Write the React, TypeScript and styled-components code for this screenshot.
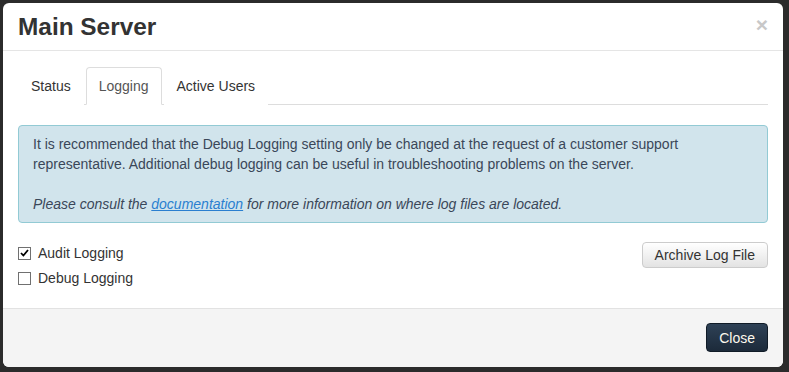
import React from 'react';
import styled, { createGlobalStyle } from 'styled-components';

const GlobalStyle = createGlobalStyle`
  html, body {
    margin: 0;
    padding: 0;
    background: #2b2b2b;
    font-family: "Liberation Sans", Arial, sans-serif;
    font-size: 14px;
    color: #333;
  }
`

const Backdrop = styled.div`
  width: 789px;
  height: 372px;
  padding: 3px 0 0 3px;
  box-sizing: border-box;
  overflow: hidden;
`

const Modal = styled.div`
  width: 780px;
  height: 364px;
  background: #fff;
  border-radius: 6px;
  display: flex;
  flex-direction: column;
  overflow: hidden;
`

const Header = styled.div`
  display: flex;
  align-items: center;
  justify-content: space-between;
  padding: 11px 15px;
  border-bottom: 1px solid #e5e5e5;
`

const Title = styled.h4`
  margin: 0;
  font-size: 24.4px;
  line-height: 25px;
  font-weight: bold;
  color: #333;
`

const CloseX = styled.button`
  border: 0;
  background: none;
  padding: 0;
  font-family: "Liberation Sans", Arial, sans-serif;
  font-size: 21px;
  font-weight: bold;
  line-height: 1;
  color: #c8c8c8;
  margin-top: -4px;
  cursor: pointer;
`

const Body = styled.div`
  flex: 1;
  padding: 16px 15px 15px;
`

const TabList = styled.ul`
  display: flex;
  list-style: none;
  margin: 0;
  padding: 0;
  border-bottom: 1px solid #ddd;
`

const Tab = styled.li<{ $active?: boolean }>`
  margin: 0 2px -1px 0;
  padding: 0 12px;
  line-height: 36px;
  border: 1px solid ${(p) => (p.$active ? '#ddd' : 'transparent')};
  border-bottom-color: ${(p) => (p.$active ? '#fff' : 'transparent')};
  border-radius: 4px 4px 0 0;
  background: #fff;
  color: ${(p) => (p.$active ? '#555' : '#333')};
  cursor: pointer;
`

const Alert = styled.div`
  margin-top: 20px;
  padding: 8px 14px;
  background: #d1e4ec;
  border: 1px solid #92cad4;
  border-radius: 4px;
  color: #3a4759;
  line-height: 20px;
`

const Para = styled.p<{ $italic?: boolean }>`
  margin: 0;
  font-style: ${(p) => (p.$italic ? 'italic' : 'normal')};
  & + & {
    margin-top: 20px;
  }
`

const DocLink = styled.a`
  color: #2a7fd0;
  text-decoration: underline;
`

const Options = styled.div`
  display: flex;
  justify-content: space-between;
  align-items: flex-start;
  margin-top: 19px;
`

const CheckList = styled.div`
  display: flex;
  flex-direction: column;
  gap: 5px;
  margin-top: 1px;
`

const CheckRow = styled.label`
  display: flex;
  align-items: center;
  gap: 7px;
  line-height: 20px;
  color: #333;
`

const Box = styled.span`
  width: 11px;
  height: 11px;
  border: 1px solid #707070;
  background: #fff;
  display: flex;
  align-items: center;
  justify-content: center;
`

const Button = styled.button<{ $dark?: boolean }>`
  font-family: "Liberation Sans", Arial, sans-serif;
  font-size: 14px;
  line-height: 20px;
  padding: ${(p) => (p.$dark ? '3.5px 12px' : '2px 12px')};
  border-radius: 4px;
  border: 1px solid ${(p) => (p.$dark ? '#101b27' : '#ccc')};
  background: ${(p) =>
    p.$dark
      ? 'linear-gradient(to bottom, #2e4156 0%, #1c2a3a 100%)'
      : 'linear-gradient(to bottom, #fff 0%, #e3e3e3 100%)'};
  color: ${(p) => (p.$dark ? '#fdf9ee' : '#333')};
  cursor: pointer;
`

const Footer = styled.div`
  display: flex;
  justify-content: flex-end;
  padding: 14px 15px 15px;
  background: #f4f4f4;
  border-top: 1px solid #e2e2e2;
`

function Checkbox({ label, checked }: { label: string; checked?: boolean }) {
  return <CheckRow>
    <Box>
      {checked && <svg width="9" height="8" viewBox="0 0 9 8">
        <path d="M1 4 L3.4 6.5 L8 1" fill="none" stroke="#000" strokeWidth="1.8" />
      </svg>}
    </Box>
    {label}
  </CheckRow>
}

export default function App() {
  return <>
    <GlobalStyle />
    <Backdrop>
      <Modal>
        <Header>
          <Title>Main Server</Title>
          <CloseX>×</CloseX>
        </Header>
        <Body>
          <TabList>
            <Tab>Status</Tab>
            <Tab $active>Logging</Tab>
            <Tab>Active Users</Tab>
          </TabList>
          <Alert>
            <Para>
              It is recommended that the Debug Logging setting only be changed at the request of a customer support
              representative. Additional debug logging can be useful in troubleshooting problems on the server.
            </Para>
            <Para $italic>
              Please consult the <DocLink href="#">documentation</DocLink> for more information on where log files are located.
            </Para>
          </Alert>
          <Options>
            <CheckList>
              <Checkbox label="Audit Logging" checked />
              <Checkbox label="Debug Logging" />
            </CheckList>
            <Button>Archive Log File</Button>
          </Options>
        </Body>
        <Footer>
          <Button $dark>Close</Button>
        </Footer>
      </Modal>
    </Backdrop>
  </>
}
